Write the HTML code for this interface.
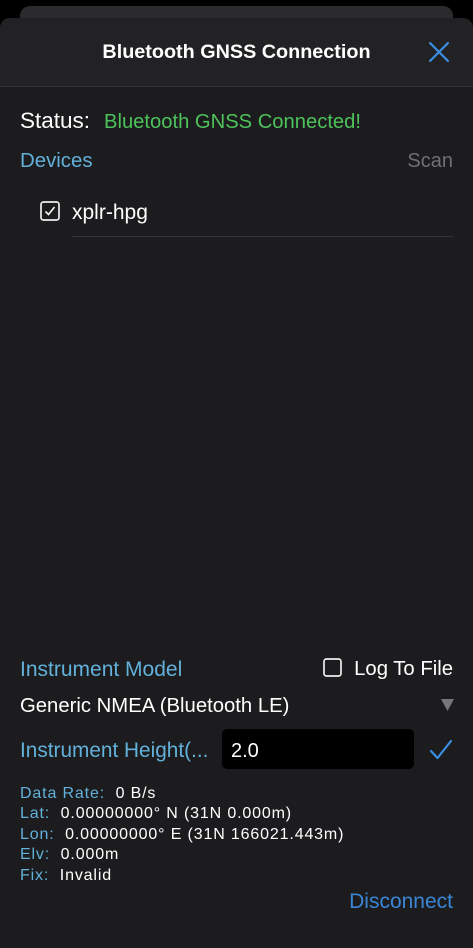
<!DOCTYPE html>
<html><head><style>
html,body{margin:0;padding:0;background:#000;width:473px;height:948px;overflow:hidden;font-family:"Liberation Sans",sans-serif;}
.abs{position:absolute;white-space:nowrap;}
.back{position:absolute;left:20px;top:6px;width:433px;height:40px;background:#2b2b2d;border-radius:10px;}
.sheet{position:absolute;left:0;top:18px;width:473px;height:930px;background:#1c1c1e;border-radius:10px 10px 0 0;overflow:hidden;}
.hdr{position:absolute;left:0;top:0;width:473px;height:68px;background:#222224;border-bottom:1px solid #333336;}
.blue{color:#62b1da;}
.t{line-height:1;}
.r{right:20px;text-align:right;}
.d{font-size:16px;letter-spacing:0.85px;color:#fff;}
</style></head><body>
<div class="back"></div>
<div class="sheet">
<div class="hdr"></div>
</div>
<div class="abs t" style="left:0;width:473px;text-align:center;top:43px;font-size:19.8px;font-weight:bold;color:#fff;">Bluetooth GNSS Connection</div>
<svg class="abs" style="left:428px;top:41px" width="22" height="22" viewBox="0 0 22 22"><path d="M2 2L20 20M20 2L2 20" stroke="#3a8ee6" stroke-width="2.2" stroke-linecap="round"/></svg>

<div class="abs t" style="left:20px;top:110px;font-size:22.5px;color:#fff;">Status:</div>
<div class="abs t" style="left:104px;top:112px;font-size:20.2px;color:#4ec25a;">Bluetooth GNSS Connected!</div>
<div class="abs t blue" style="left:20px;top:151px;font-size:20.4px;">Devices</div>
<div class="abs t r" style="top:151px;font-size:20px;color:#707072;">Scan</div>
<svg class="abs" style="left:40px;top:201px" width="21" height="21" viewBox="0 0 21 21"><rect x="1" y="1" width="18" height="18" rx="2.5" fill="none" stroke="#eee" stroke-width="1.7"/><path d="M5.5 10.5L8.5 13.5L14.5 6" fill="none" stroke="#eee" stroke-width="1.7"/></svg>
<div class="abs t" style="left:72px;top:202px;font-size:21px;color:#fff;">xplr-hpg</div>
<div class="abs" style="left:72px;top:236px;width:381px;height:1px;background:#343437;"></div>

<div class="abs t blue" style="left:20px;top:659px;font-size:21px;">Instrument Model</div>
<svg class="abs" style="left:323px;top:658px" width="20" height="20" viewBox="0 0 20 20"><rect x="1" y="1" width="17" height="17" rx="2.5" fill="none" stroke="#eee" stroke-width="1.7"/></svg>
<div class="abs t r" style="top:659px;font-size:20.3px;color:#fff;">Log To File</div>
<div class="abs t" style="left:20px;top:696px;font-size:20.3px;color:#fff;">Generic NMEA (Bluetooth LE)</div>
<svg class="abs" style="left:441px;top:699px" width="13" height="12" viewBox="0 0 13 12"><path d="M0 0H13L6.5 12Z" fill="#77777a"/></svg>
<div class="abs t blue" style="left:20px;top:741px;font-size:20.8px;">Instrument Height(...</div>
<div class="abs" style="left:222px;top:729px;width:192px;height:40px;background:#000;border-radius:5px;"></div>
<div class="abs t" style="left:231px;top:741px;font-size:20px;color:#fff;">2.0</div>
<svg class="abs" style="left:429px;top:738px" width="24" height="24" viewBox="0 0 24 24"><path d="M2 13L8.5 20L22 3" fill="none" stroke="#3a8ee6" stroke-width="2.2" stroke-linecap="round" stroke-linejoin="round"/></svg>

<div class="abs t d" style="left:20px;top:786px;"><span class="blue">Data Rate:</span>&nbsp; 0 B/s</div>
<div class="abs t d" style="left:20px;top:806px;"><span class="blue">Lat:</span>&nbsp; 0.00000000° N (31N 0.000m)</div>
<div class="abs t d" style="left:20px;top:827px;"><span class="blue">Lon:</span>&nbsp; 0.00000000° E (31N 166021.443m)</div>
<div class="abs t d" style="left:20px;top:847px;"><span class="blue">Elv:</span>&nbsp; 0.000m</div>
<div class="abs t d" style="left:20px;top:868px;"><span class="blue">Fix:</span>&nbsp; Invalid</div>
<div class="abs t r" style="top:891px;font-size:21px;color:#3a86d6;">Disconnect</div>
</body></html>
